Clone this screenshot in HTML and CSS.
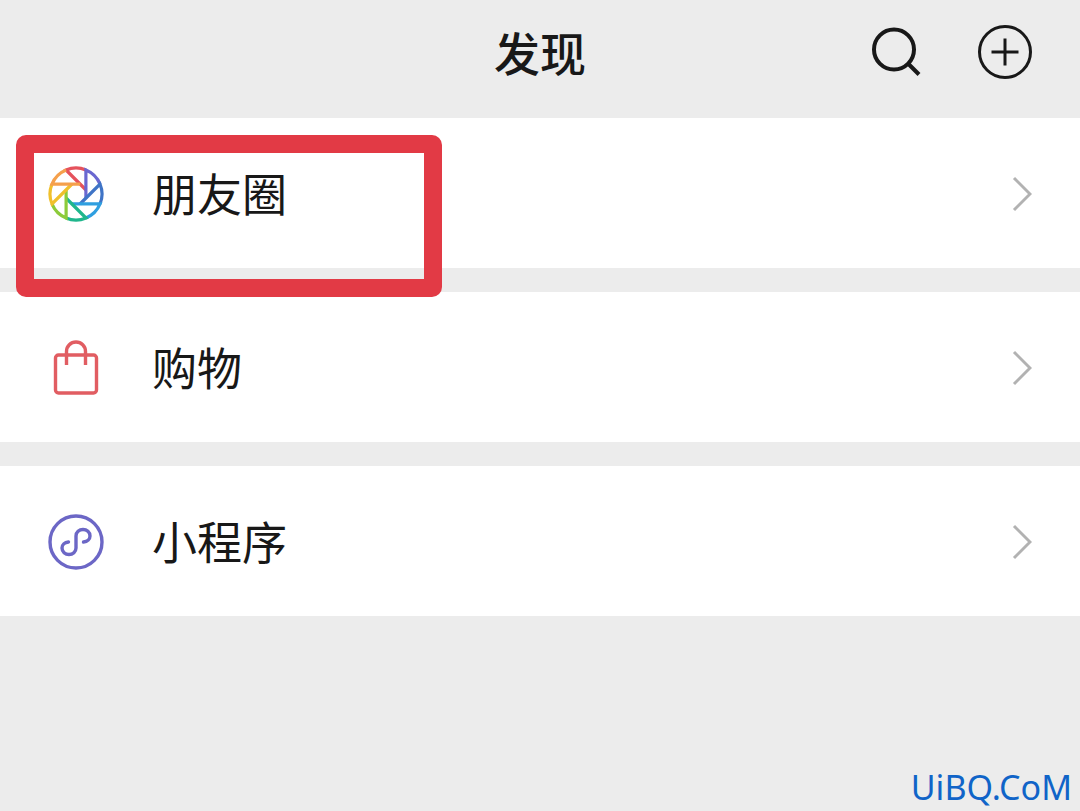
FILE: index.html
```
<!DOCTYPE html>
<html lang="zh-CN">
<head>
    <meta charset="UTF-8">
    <meta name="viewport" content="width=device-width, initial-scale=1.0">
    <title>发现</title>
    <link rel="stylesheet" href="styles.css">
</head>
<body>
    <header class="header">
        <h1>发现</h1>
        <div class="header-actions">
            <button class="icon-btn" type="button" aria-label="搜索">
                <svg viewBox="0 0 56 56" fill="none" stroke="#181818" stroke-width="4">
                    <circle cx="25" cy="25.5" r="20"/>
                    <path d="M39 39.500l11 11"/>
                </svg>
            </button>
            <button class="icon-btn" type="button" aria-label="添加">
                <svg viewBox="0 0 56 56" fill="none" stroke="#181818" stroke-width="3">
                    <circle cx="28" cy="28" r="25.5"/>
                    <path d="M28 14.5v27M14.5 28h27"/>
                </svg>
            </button>
        </div>
    </header>

    <nav class="menu">
        <div class="menu-group">
            <a class="menu-item" href="#moments">
                <svg class="menu-icon" viewBox="0 0 56 56" fill="none" stroke-width="3.2">
                    <defs>
                        <path id="blade" d="M38 24L18 4A26 26 0 0 1 38 4"/>
                    </defs>
                    <use href="#blade" stroke="#e5525c"/>
                    <use href="#blade" stroke="#6a67d0" transform="rotate(45 28 28)"/>
                    <use href="#blade" stroke="#3f74c6" transform="rotate(90 28 28)"/>
                    <use href="#blade" stroke="#2f9fe0" transform="rotate(135 28 28)"/>
                    <use href="#blade" stroke="#1fb68c" transform="rotate(180 28 28)"/>
                    <use href="#blade" stroke="#8ccb3a" transform="rotate(225 28 28)"/>
                    <use href="#blade" stroke="#f0c02c" transform="rotate(270 28 28)"/>
                    <use href="#blade" stroke="#f5a04c" transform="rotate(315 28 28)"/>
                </svg>
                <span class="menu-label">朋友圈</span>
                <svg class="chevron" viewBox="0 0 20 36"><path d="M2 2l16 16L2 34"/></svg>
            </a>
            <div class="highlight"></div>
        </div>

        <div class="menu-group">
            <a class="menu-item" href="#shopping">
                <svg class="menu-icon" viewBox="0 0 56 56" fill="none" stroke="#e15d62" stroke-width="3.4">
                    <rect x="7.5" y="15" width="41" height="38" rx="3"/>
                    <path d="M18.5 25V11.500a9.5 9.5 0 0 1 19 0V25"/>
                </svg>
                <span class="menu-label">购物</span>
                <svg class="chevron" viewBox="0 0 20 36"><path d="M2 2l16 16L2 34"/></svg>
            </a>
        </div>

        <div class="menu-group">
            <a class="menu-item" href="#miniprogram">
                <svg class="menu-icon" viewBox="0 0 56 56" fill="none" stroke="#6c67c6" stroke-width="3.4" stroke-linecap="round">
                    <circle cx="28" cy="28" r="26"/>
                    <path d="M35.500 28c4-.4 6.500-2.900 6.500-6 0-3.700-3.200-6.500-7-6.500s-7 2.800-7 6.500v12c0 3.700-3.200 6.500-7 6.500s-7-2.800-7-6.500c0-3.100 2.500-5.600 6.500-6"/>
                </svg>
                <span class="menu-label">小程序</span>
                <svg class="chevron" viewBox="0 0 20 36"><path d="M2 2l16 16L2 34"/></svg>
            </a>
        </div>
    </nav>

    <div class="watermark">UiBQ.CoM</div>
</body>
</html>
```

FILE: styles.css
```
* {
    margin: 0;
    padding: 0;
    box-sizing: border-box;
}

body {
    position: relative;
    min-height: 100vh;
    font-family: "Noto Sans CJK SC", sans-serif;
    background-color: #ececec;
    color: #181818;
}

/* Header */
.header {
    display: grid;
    grid-template-columns: 1fr auto 1fr;
    align-items: center;
    padding: 17px 47px 31px;
}

.header h1 {
    grid-column: 2;
    padding-bottom: 2px;
    font-size: 46px;
    font-weight: 500;
    line-height: 68px;
}

.header-actions {
    display: flex;
    justify-content: flex-end;
    gap: 52px;
}

.icon-btn {
    width: 56px;
    height: 56px;
    border: none;
    background: none;
    cursor: pointer;
}

.icon-btn svg {
    display: block;
    width: 100%;
}

/* Menu */
.menu {
    display: flex;
    flex-direction: column;
    gap: 24px;
}

.menu-group {
    position: relative;
    background-color: #fff;
}

.menu-item {
    display: flex;
    align-items: center;
    gap: 48px;
    height: 150px;
    padding: 2px 48px 0;
    color: inherit;
    text-decoration: none;
}

.menu-icon {
    width: 56px;
    height: 56px;
}

.menu-label {
    flex: 1;
    padding-bottom: 2px;
    font-size: 45px;
    line-height: 68px;
}

.chevron {
    width: 20px;
    height: 36px;
    fill: none;
    stroke: #b2b2b2;
    stroke-width: 3;
}

/* Red frame over the first entry */
.highlight {
    position: absolute;
    z-index: 1;
    top: 17px;
    left: 16px;
    width: 426px;
    height: 162px;
    border: 18px solid #e23a45;
    border-radius: 10px;
    pointer-events: none;
}

.watermark {
    position: absolute;
    right: 8px;
    bottom: 4px;
    font-family: "Noto Sans", sans-serif;
    font-size: 34px;
    line-height: 40px;
    color: #1064c8;
}
```
